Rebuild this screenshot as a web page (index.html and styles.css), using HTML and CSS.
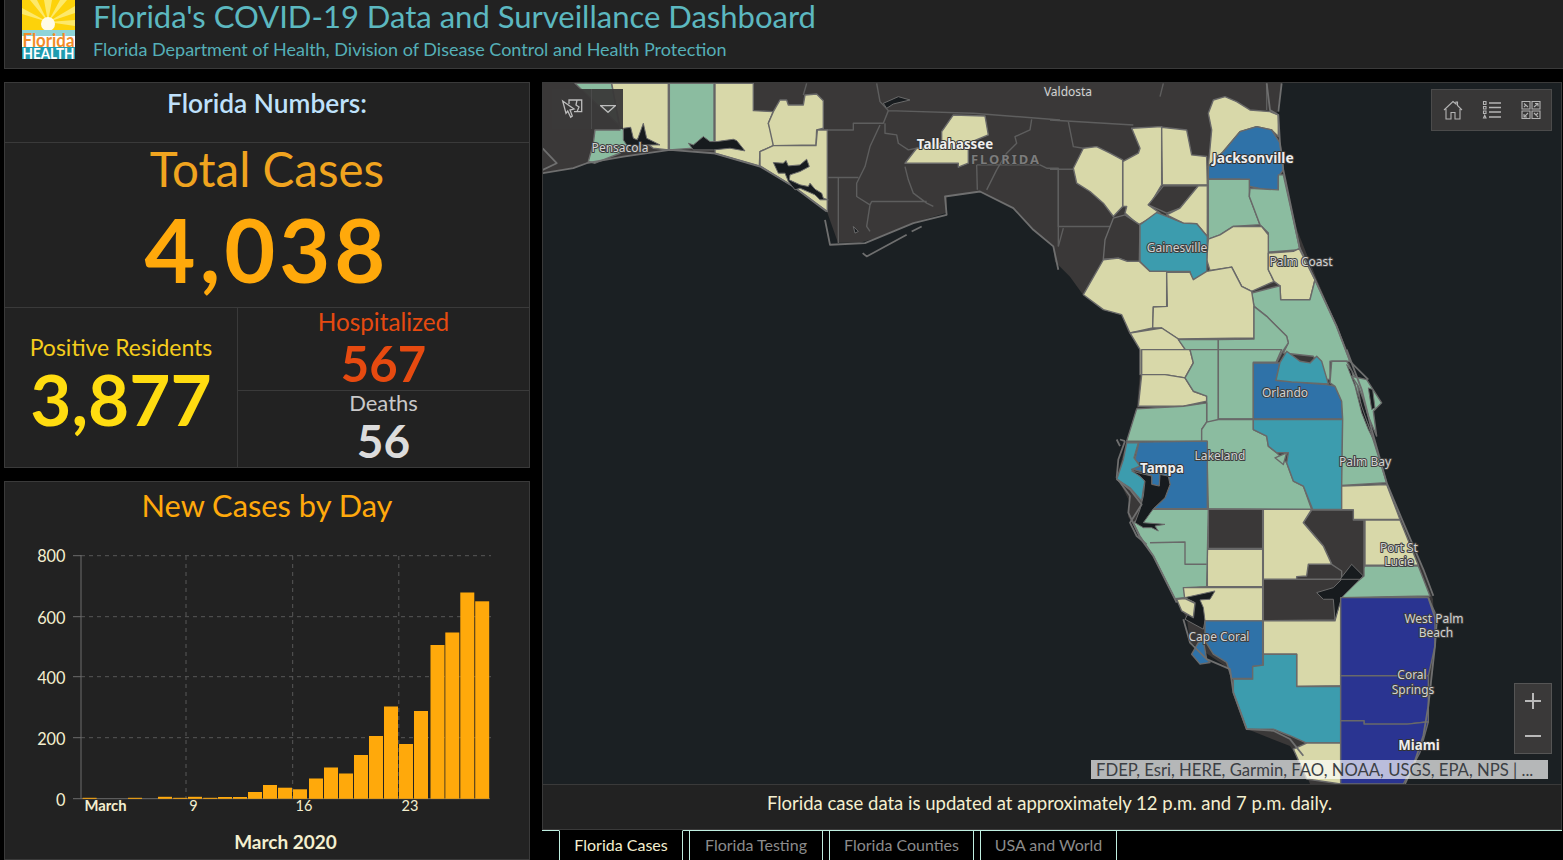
FILE: index.html
```html
<!DOCTYPE html>
<html lang="en">
<head>
<meta charset="utf-8">
<title>Florida's COVID-19 Data and Surveillance Dashboard</title>
<link rel="stylesheet" href="styles.css">
</head>
<body>
<header class="topbar">
  <svg class="logo" viewBox="0 0 53 59">
    <rect width="53" height="36" fill="#fdd20a"/>
    <g fill="#fde96a">
      <path d="M26 22L0 8V14Z"/><path d="M26 22L8 0H15Z"/><path d="M26 22L22 0H30Z"/><path d="M26 22L38 0H45Z"/><path d="M26 22L53 6V13Z"/><path d="M26 22L53 20V26Z"/>
    </g>
    <circle cx="26" cy="24" r="7" fill="#fffbe6"/>
    <rect y="30" width="53" height="6" fill="#8fd4d8"/>
    <rect y="36" width="53" height="11" fill="#ffffff"/>
    <rect y="47" width="53" height="12" fill="#1f9cb0"/>
    <text class="logo-top" x="26.5" y="46.500" textLength="52" lengthAdjust="spacingAndGlyphs">Florida</text>
    <text class="logo-bottom" x="26.5" y="58.500" textLength="52" lengthAdjust="spacingAndGlyphs">HEALTH</text>
  </svg>
  <div class="titles">
    <h1 class="title">Florida's COVID-19 Data and Surveillance Dashboard</h1>
    <p class="subtitle">Florida Department of Health, Division of Disease Control and Health Protection</p>
  </div>
</header>

<main class="layout">
  <div class="left">
    <section class="panel numbers">
      <div class="numbers-head">Florida Numbers:</div>
      <div class="total">
        <div class="total-label">Total Cases</div>
        <div class="total-value">4,038</div>
      </div>
      <div class="split">
        <div class="residents">
          <div class="residents-label">Positive Residents</div>
          <div class="residents-value">3,877</div>
        </div>
        <div class="stack">
          <div class="stack-cell hosp">
            <div class="hosp-label">Hospitalized</div>
            <div class="hosp-value">567</div>
          </div>
          <div class="stack-cell deaths">
            <div class="deaths-label">Deaths</div>
            <div class="deaths-value">56</div>
          </div>
        </div>
      </div>
    </section>

    <section class="panel chart-panel">
      <h2 class="chart-title">New Cases by Day</h2>
      <svg class="chart" viewBox="5 530 524 330">
        <g class="grid">
          <path d="M81 555.7H491M81 616.7H491M81 676.7H491M81 737.7H491"/>
          <path d="M186 556V799M292.7 556V799M398.8 556V799"/>
        </g>
        <path class="axis" d="M81 555V799M73 555.7H81M73 616.7H81M73 676.7H81M73 737.7H81M73 798.7H490"/>
        <g class="bars">
          <rect x="82.6" y="797.8" width="14" height="1"/>
          <rect x="128" y="797.8" width="14" height="1"/>
          <rect x="158" y="796.8" width="14" height="2"/>
          <rect x="173.2" y="797.8" width="14" height="1"/>
          <rect x="188" y="796.8" width="14" height="2"/>
          <rect x="203.2" y="797.8" width="14" height="1"/>
          <rect x="218" y="797" width="14" height="1.8"/>
          <rect x="233" y="797" width="14" height="1.8"/>
          <rect x="248" y="792" width="14" height="6.8"/>
          <rect x="263" y="785" width="14" height="13.8"/>
          <rect x="278" y="787.7" width="14" height="11"/>
          <rect x="293" y="789.3" width="14" height="9.5"/>
          <rect x="309" y="778.5" width="14" height="20.3"/>
          <rect x="324" y="767.5" width="14" height="31.3"/>
          <rect x="339" y="773.5" width="14" height="25.3"/>
          <rect x="354" y="755" width="14" height="43.8"/>
          <rect x="369" y="736" width="14" height="62.8"/>
          <rect x="384" y="706.5" width="14" height="92.3"/>
          <rect x="399" y="744" width="14" height="54.8"/>
          <rect x="414" y="711" width="14" height="87.8"/>
          <rect x="430.5" y="645" width="14" height="153.8"/>
          <rect x="445.3" y="632.5" width="14" height="166.3"/>
          <rect x="460.3" y="592.5" width="14" height="206.3"/>
          <rect x="475.2" y="601.3" width="14" height="197.5"/>
        </g>
        <g class="ylabels">
          <text x="65.500" y="562">800</text>
          <text x="65.500" y="623.5">600</text>
          <text x="65.500" y="683.5">400</text>
          <text x="65.500" y="744.5">200</text>
          <text x="65.500" y="805.5">0</text>
        </g>
        <text class="tick-bold" x="84.5" y="811">March</text>
        <g class="xlabels">
          <text x="193.5" y="811">9</text>
          <text x="304" y="811">16</text>
          <text x="410" y="811">23</text>
        </g>
        <text class="xtitle" x="285.5" y="849">March 2020</text>
      </svg>
    </section>
  </div>

  <div class="right">
    <section class="panel map-panel">
      <div class="map">
        <svg class="map-svg" viewBox="543 83 1018 702" preserveAspectRatio="none">
          <rect class="sea" x="543" y="83" width="1018" height="702"/>
          <path class="land" d="M543 83H1282L1277 113L1283 173L1297 230L1317 280L1347 350L1363 427L1387 483L1403 523L1423 570L1433 600L1435 647L1427 730L1403 785H1310L1303 767L1290 747L1247 730L1233 693L1230 670L1190 643L1187 620L1173 593L1153 557L1140 537L1128 517L1130 503L1117 477L1127 440L1137 407L1142 350L1140 350L1128 332L1122 315L1103 310L1083 295L1070 277L1055 262L1053 247L1033 230L1013 208L980 192L947 197L947 213L913 223L877 238L860 243L838 243L827 212L793 187L760 167L713 153L670 150L623 157L587 163L573 168L543 173Z"/>

          <!-- Panhandle -->
          <g transform="translate(540 80) scale(.33333)">
            <path class="c dark-line" d="M1045 92L1300 100L1560 120M860 150H940V130H1030L1045 92M865 293H955M1035 130V160L1070 165L1075 190L1105 210L1130 205M1020 135L990 200L975 260L950 310V350L990 375L995 365H1160M990 375L980 440L990 455M895 490V293M1095 260L1105 300L1120 340L1160 370L1180 380M1310 255L1312 330M1340 330L1370 270L1400 220L1430 190L1425 170L1470 150L1475 118M1310 255H1500L1520 265H1555V500M800 10L790 45M1010 10L1020 65L1045 92"/>
            <path class="c green" d="M105 10H215L240 150H165L160 190L145 245L165 250L240 220L265 190L250 148Z"/>
            <path class="c cream" d="M215 10H385V210L340 205L300 175L265 190L250 148L240 140Z"/>
            <path class="c green" d="M388 10H522V185L460 205L388 210Z"/>
            <path class="c cream" d="M525 10H640V92L700 95L685 130L700 175L700 197L660 215L658 258L525 220Z"/>
            <path class="c cream" d="M700 95L720 60H740L745 75H790L795 45L830 42L850 62V145L830 150L828 195L700 197L685 130Z"/>
            <path class="c cream" d="M660 215L700 197H828L832 150H862V395L760 320L660 258Z"/>
            <path class="c cream" d="M1240 105L1335 108L1345 165L1285 190V250L1255 262V250H1095L1130 205L1205 185V155Z"/>
            <path class="water" d="M445 190L460 195L490 170L510 185L530 185L580 178L590 182L615 213L570 205L520 210L460 210Z"/>
            <path class="water" d="M250 145L272 142L280 175L292 180L310 130L320 175L360 195L305 195L270 210L250 180Z"/>
            <path class="water" d="M1030 70L1075 50L1110 60L1060 72L1040 85Z"/>
            <path class="water" d="M940 440L955 455L945 460Z"/>
            <path class="c island" d="M8 280L100 265L140 250L250 230L390 210L520 220L660 260L760 320L860 395M855 420L870 495L975 490L1120 430L1220 405L1215 350L1320 335L1420 385L1480 450L1540 500L1555 570M968 520L980 530L1100 465M1115 455L1145 440M8 205L50 250L8 270"/>
          </g>
          <g transform="translate(700 130) scale(.33333)">
            <path class="water" d="M220 98L250 100L258 92L265 108L300 105L320 88L328 110L300 125L270 135L268 150L300 165L325 170L330 160L345 178L365 190L370 205L385 210L360 210L345 195L300 175L285 180L265 155L255 130L235 130L228 115Z"/>
          </g>

          <!-- North-east counties -->
          <g transform="translate(1050 80) scale(.33333)">
            <path class="c dark-line" d="M0 268H70M25 268V440H185M55 125L70 200L100 205M40 445L25 500M0 120L250 135M650 10V90M340 10L330 50"/>
            <path class="c cream" d="M475 100L490 60L525 50L560 65L600 90L660 95L685 105V170L665 150L620 140L570 155L520 215L475 260L485 150Z"/>
            <path class="c blue" d="M475 260L520 215L570 155L620 140L665 150L690 190L700 270L685 290V330H650L600 320L570 298H475Z"/>
            <path class="c green" d="M475 298H598V350L630 435L550 440L510 465L475 478Z"/>
            <path class="c green" d="M600 325L685 330V285L700 285L750 510L655 517V460L630 435L598 350Z"/>
            <path class="c cream" d="M475 478L510 465L550 440H635L655 465V570L672 605L605 635L575 620L545 562L480 572L470 540Z"/>
            <path class="c cream" d="M655 520L730 515L750 505L795 600L780 660H692L690 618L672 605L655 570Z"/>
            <path class="c green" d="M605 640L690 618L692 660H780L795 600L860 740L900 845H840V900H830L790 830L700 820L715 790L710 770L650 710L612 680Z"/>
            <path class="c cream" d="M245 145L335 140V315L305 365L295 375L330 400L265 435L225 400L230 380H218V245L265 220L270 205Z"/>
            <path class="c cream" d="M335 142L410 150L425 225L470 230L472 315H337Z"/>
            <path class="c dark" d="M340 318H445L390 385L350 400L295 375Z"/>
            <path class="c cream" d="M445 318H472V470L440 432L400 430L350 405L390 385Z"/>
            <path class="c dark" d="M190 415L225 405L270 435L268 545H232L205 535L160 538L165 480Z"/>
            <path class="c teal" d="M270 435L320 398L350 410L400 430L440 432L472 470L470 590L455 605L425 598L420 575H300L270 545Z"/>
            <path class="c cream" d="M70 265L100 205L140 200L180 220L218 240V380L190 410L160 370L120 335L80 310Z"/>
            <path class="c cream" d="M100 645L160 540L205 535L232 545H268L300 575H350V680L310 682L308 745L240 760L215 705L160 690Z"/>
            <path class="c cream" d="M350 578H420L430 600L470 575L545 562L575 620L605 635L612 680V775L385 778L335 745H308L310 682L352 680Z"/>
            <path class="c cream" d="M240 760L335 745L385 778L430 845L405 895L270 885L270 810Z"/>
            <path class="c green" d="M385 780H505V900H405L430 845Z"/>
            <path class="c green" d="M505 780L612 778V680L650 710L710 770L715 790L695 820L680 850H610L608 900H505Z"/>
            <path class="island" d="M650 10L660 90L685 105L690 190L700 270L750 510L795 600L860 740L900 845L955 900M695 10L685 95"/>
          </g>

          <!-- Central counties -->
          <g transform="translate(1090 350) scale(.33333)">
            <path class="c cream" d="M155 0H300L310 40L285 85L225 75H155Z"/>
            <path class="c cream" d="M155 75H225L285 85L310 125L350 140V155L280 170H145Z"/>
            <path class="c green" d="M300 0H385V218L350 218V140L310 125L285 85L310 40Z"/>
            <path class="c green" d="M385 0H575L558 38H490V208H385Z"/>
            <path class="c green" d="M140 178L280 170L350 160V218L335 240V275H110Z"/>
            <path class="c green" d="M335 240L350 218L385 210H490V240L530 260L535 290L560 310L590 340L610 395L640 410L665 480L355 478L350 275H335Z"/>
            <path class="c teal" d="M490 210H758L755 480H668L640 410L610 395L590 340L595 310H560L535 290L530 260L490 240Z"/>
            <path class="c green" d="M555 325L590 310L580 345Z"/>
            <path class="c blue" d="M490 40H570L558 92L605 97L710 105L735 110L755 155L758 208H490Z"/>
            <path class="c teal" d="M570 38L590 5L630 35L660 40L680 20L695 35L715 103L605 97L558 92Z"/>
            <path class="c green" d="M725 35H770L800 90L815 180L840 240L890 400L755 408L758 208L755 155L735 110L720 100Z"/>
            <path class="water" d="M770 45L785 65L800 120L815 170L850 270L835 240L815 190L795 110Z"/>
            <path class="c green" d="M785 80L830 90L875 160L850 185L860 260L835 200L820 150L805 110Z"/>
            <path class="water" d="M835 115L848 120L855 175L845 180Z"/>
            <path class="c cream" d="M755 410L890 405L930 510H790V482L755 480Z"/>
            <path class="c cream" d="M825 512H930L985 648H825Z"/>
            <path class="c green" d="M825 650H985L1020 740L755 745L790 690Z"/>
            <path class="c dark" d="M665 482H790V512H822V680L755 735V665L725 645L700 590L640 520Z"/>
            <path class="c cream" d="M520 480H665L640 520L700 590L725 645H655L650 680L620 682V712H520Z"/>
            <path class="c dark" d="M355 480H518V597H355Z"/>
            <path class="c cream" d="M352 600H518V712H352Z"/>
            <path class="c green" d="M185 480H355L350 712L285 715V745L255 748L190 620L150 560L130 520Z"/>
            <path class="c no-fill" d="M180 580L285 578V645H350"/>
            <path class="water" d="M785 645L820 680L755 740L745 770L720 750L680 740L710 725L750 690Z"/>
            <path class="island" d="M770 0L815 120L845 240L890 400L940 520L1000 660L1030 740M105 275L85 330L80 385L120 440L115 490L150 565L190 620L260 760M80 270L90 290"/>
          </g>

          <!-- Tampa Bay -->
          <g transform="translate(1110 430) scale(.33333)">
            <path class="c blue" d="M87 38L292 35V238H130L165 205L180 165L175 140L150 135L148 170L125 165V140L105 130L70 120L90 105L75 90Z"/>
            <path class="c teal" d="M50 40H85L72 85L90 110L65 120L90 140L105 155L100 180L95 215L60 175L20 150L40 90Z"/>
            <path class="water" d="M65 125L105 135L125 140V165L148 170L150 135L175 140L180 165L165 205L130 238L100 280L165 285L135 290L145 305L125 295L100 295L75 280L90 240L100 200L105 155L90 140Z"/>
            <path class="island" d="M30 30L45 35M22 150L60 180L95 225L60 280L80 320L110 345"/>
          </g>

          <!-- South counties -->
          <g transform="translate(1150 580) scale(.33333)">
            <path class="c dark" d="M340 0H575L555 122L340 125Z"/>
            <path class="c cream" d="M100 25H338V125H165L135 90L105 65Z"/>
            <path class="water" d="M195 35L180 60L150 62L160 85L165 125L160 150L105 120L125 85L135 70L105 55Z"/>
            <path class="c cream" d="M80 60L105 58L135 72L130 115L95 95Z"/>
            <path class="c cream" d="M340 125H555L572 60V320L440 322V225H340Z"/>
            <path class="water" d="M500 40L550 25L575 0H630L575 55L555 122L550 60L520 60Z"/>
            <path class="c blue" d="M165 125H338V258L308 262V298H245L230 250L190 225L165 185Z"/>
            <path class="c blue" d="M145 190L160 185L170 240L180 250L150 255L125 225Z"/>
            <path class="c teal" d="M250 300H308V262L340 258V225H440V322L572 322V492H470L420 470L370 450H290L250 340Z"/>
            <path class="c cream" d="M470 492H572V615L470 600L430 510Z"/>
            <path class="c navy" d="M572 55H835L855 100V200L835 290H572Z"/>
            <path class="c navy" d="M572 290H835V428L772 435H642V425H572Z"/>
            <path class="c navy" d="M572 425H642V435H772L835 428L810 520L760 615H572Z"/>
            <path class="island" d="M100 120L120 190L170 240L240 270L250 340L290 450L370 455L420 480L460 530M835 55L860 130L855 200L835 380L820 470L790 560L765 615"/>
          </g>

          <!-- Labels -->
          <g class="labels">
            <text class="lab lab-sm" x="1068" y="96.5">Valdosta</text>
            <text class="lab lab-sm" x="620" y="152">Pensacola</text>
            <text class="lab lab-b" x="955" y="149.5">Tallahassee</text>
            <text class="lab lab-state" x="1006" y="164">FLORIDA</text>
            <text class="lab lab-j" x="1253" y="163.500">Jacksonville</text>
            <text class="lab lab-sm" x="1177" y="252">Gainesville</text>
            <text class="lab lab-sm" x="1301" y="266">Palm Coast</text>
            <text class="lab lab-sm" x="1285" y="397.5">Orlando</text>
            <text class="lab lab-sm" x="1220" y="461">Lakeland</text>
            <text class="lab lab-b" x="1162" y="474">Tampa</text>
            <text class="lab lab-sm" x="1365" y="467">Palm Bay</text>
            <text class="lab lab-sm" x="1399" y="553">Port St</text>
            <text class="lab lab-sm" x="1399" y="567">Lucie</text>
            <text class="lab lab-sm" x="1219" y="642">Cape Coral</text>
            <text class="lab lab-sm" x="1434" y="624">West Palm</text>
            <text class="lab lab-sm" x="1436" y="638">Beach</text>
            <text class="lab lab-sm" x="1412" y="680">Coral</text>
            <text class="lab lab-sm" x="1413" y="695">Springs</text>
            <text class="lab lab-b" x="1419" y="750.5">Miami</text>
          </g>
        </svg>

        <div class="tool select-tool">
          <span class="tool-cell tool-wide">
            <svg class="ico" viewBox="0 0 22 20"><path d="M1.700 2L5 14.300L6.700 12L9.700 18.300L11.300 17L9 11L13 10ZM8 5V1H20.700V12.700H13M16 1L15 6L18 8L16 12.700"/></svg>
          </span>
          <span class="tool-cell tool-drop">
            <svg class="ico-tri" viewBox="0 0 16 8"><path d="M.7 .7H15.300L8 7.300Z"/></svg>
          </span>
        </div>

        <div class="tool right-tools">
          <svg class="ico-bar" viewBox="0 0 20 20"><path d="M1 10L10 1.500L13 4V2H14.500V5.500L19 10M3 9V19H8V12.500H12V19H17V9"/></svg>
          <svg class="ico-bar" viewBox="0 0 20 20"><path class="ico-thick" d="M7 3H19M7 7.500H19M7 12H19M7 17H19"/><path d="M1.500 1.500H4V4.500H1.500ZM1.500 6.500H4V9H1.500ZM1.500 11H4V13.500H1.500ZM2.700 15.300L4 18H1.500Z"/></svg>
          <svg class="ico-bar" viewBox="0 0 20 20"><path d="M1 1.500H9V9H1ZM11 1.500H19V9H11ZM1 11H9V18.500H1ZM11 11H19V18.500H11ZM3 3.500L7 7M3 7L5 5M13 7L17 3.500M14 3.500H17V6.500M3 17L7 13M3 14V17H6M13 13L17 17M17 13L15 15"/></svg>
        </div>

        <div class="zoom">
          <span class="zoom-btn">
            <svg class="ico-zoom" viewBox="0 0 16 16"><path d="M8 0V16M0 8H16"/></svg>
          </span>
          <span class="zoom-btn">
            <svg class="ico-zoom" viewBox="0 0 16 16"><path d="M0 8H16"/></svg>
          </span>
        </div>

        <div class="attribution">FDEP, Esri, HERE, Garmin, FAO, NOAA, USGS, EPA, NPS | ...</div>
      </div>
      <div class="note">Florida case data is updated at approximately 12 p.m. and 7 p.m. daily.</div>
    </section>

    <nav class="tabs">
      <span class="tab tab-active">Florida Cases</span>
      <span class="tab">Florida Testing</span>
      <span class="tab">Florida Counties</span>
      <span class="tab">USA and World</span>
    </nav>
  </div>
</main>
</body>
</html>
```
FILE: styles.css
```css
* { box-sizing: border-box; }
html, body { margin: 0; height: 860px; overflow: hidden; background: #000; }
body { font-family: "Lato", "Liberation Sans", sans-serif; }

.topbar {
  margin-left: 4px;
  height: 69px;
  background: #222;
  border: 1px solid #3a3a3a;
  border-top: 0;
  border-right: 0;
  display: flex;
  align-items: flex-start;
  padding-left: 17px;
  gap: 18px;
}
.logo { width: 53px; height: 59px; flex: none; display: block; }
.logo-top { font: 700 19px "Lato", sans-serif; fill: #f28c28; text-anchor: middle; }
.logo-bottom { font: 700 15.500px "Lato", sans-serif; fill: #fff; text-anchor: middle; }
.title { margin: -2px 0 0; font-size: 31px; font-weight: 400; line-height: 36px; color: #5cb8c0; white-space: nowrap; }
.subtitle { margin: 4px 0 0; font-size: 18px; line-height: 22px; color: #55b0b8; white-space: nowrap; }

.layout { display: flex; gap: 12px; padding: 13px 1px 0 4px; height: 791px; }
.left { width: 526px; flex: none; display: flex; flex-direction: column; gap: 13px; }
.right { flex: 1; min-width: 0; display: flex; flex-direction: column; }
.panel { background: #222; border: 1px solid #3a3a3a; }

.numbers { height: 386px; display: flex; flex-direction: column; }
.numbers-head {
  height: 60px; flex: none; border-bottom: 1px solid #3a3a3a;
  text-align: center; color: #bfe1fb; font-size: 26.300px; font-weight: 600; line-height: 41px;
}
.total { height: 165px; flex: none; border-bottom: 1px solid #3a3a3a; text-align: center; }
.total-label { color: #f0a41f; font-size: 47.500px; font-weight: 400; line-height: 52px; margin-bottom: 4px; }
.total-value { color: #ffa90b; font-size: 88px; font-weight: 700; line-height: 100px; letter-spacing: 4px; }
.split { flex: 1; display: flex; min-height: 0; }
.residents { width: 233px; border-right: 1px solid #3a3a3a; text-align: center; padding-top: 24px; }
.residents-label { color: #f5cd1d; font-size: 23px; line-height: 30px; }
.residents-value { color: #ffdc10; font-size: 71px; font-weight: 700; line-height: 74px; }
.stack { flex: 1; display: flex; flex-direction: column; text-align: center; }
.stack-cell { flex: none; }
.hosp { height: 83px; border-bottom: 1px solid #3a3a3a; }
.hosp-label { color: #e64a10; font-size: 24.300px; line-height: 28px; }
.hosp-value { color: #e64a10; font-size: 49px; font-weight: 700; line-height: 50px; margin-top: 2px; }
.deaths-label { color: #c9c9c9; font-size: 22px; line-height: 24px; }
.deaths-value { color: #dcdcdc; font-size: 46px; font-weight: 700; line-height: 50px; margin-top: 1px; }

.chart-panel { flex: 1; min-height: 0; overflow: hidden; }
.chart-title { margin: 0; height: 48px; text-align: center; color: #ffa90c; font-size: 30.800px; font-weight: 400; line-height: 47px; }
.chart { display: block; width: 524px; height: 330px; }
.grid path { fill: none; stroke: #585858; stroke-width: 1; stroke-dasharray: 4 4; }
.axis { fill: none; stroke: #6c6c6c; stroke-width: 1; }
.bars rect { fill: #ffa90b; }
.ylabels text { font-size: 16.300px; fill: #f4efcf; text-anchor: end; }
.tick-bold { font-size: 14.800px; font-weight: 700; fill: #f4efcf; }
.xlabels text { font-size: 14.500px; fill: #f4efcf; text-anchor: middle; }
.xtitle { font-size: 19px; font-weight: 700; fill: #f4efcf; text-anchor: middle; }

.map-panel { flex: none; height: 748px; display: flex; flex-direction: column; }
.map { position: relative; height: 702px; flex: none; overflow: hidden; border-bottom: 1px solid #3a3a3a; }
.map-svg { display: block; width: 100%; height: 100%; }
.sea { fill: #1b2023; }
.land { fill: #3a3838; stroke: none; }
.c { stroke: #696969; stroke-width: 1.400px; vector-effect: non-scaling-stroke; stroke-linejoin: round; }
.cream { fill: #d8d8a9; }
.green { fill: #8bbca0; }
.teal { fill: #3c9cae; }
.blue { fill: #2f72a8; }
.navy { fill: #2a3491; }
.dark { fill: #3a3838; }
.dark-line { fill: none; stroke: #5e5e5e; }
.no-fill { fill: none; }
.island { fill: none; stroke: #6f6f6f; stroke-width: 1.800px; vector-effect: non-scaling-stroke; stroke-linejoin: round; }
.water { fill: #171b1e; stroke: #6a6a6a; stroke-width: 1px; vector-effect: non-scaling-stroke; stroke-linejoin: round; }
.lab { font-family: "Noto Sans", "DejaVu Sans", sans-serif; text-anchor: middle; paint-order: stroke; stroke-linejoin: round; }
.lab-sm { font-size: 12px; fill: #d2d2d2; stroke: #3f3f3f; stroke-width: 2px; }
.lab-b { font-size: 13.300px; font-weight: 700; fill: #eeeeee; stroke: #333; stroke-width: 2px; }
.lab-j { font-size: 13.800px; font-weight: 700; fill: #eeeeee; stroke: #333; stroke-width: 2px; }
.lab-state { font-size: 13px; font-weight: 700; letter-spacing: 2px; fill: #7c7c7c; stroke: #333; stroke-width: 1px; }

.tool { position: absolute; background: rgba(58, 57, 57, .95); display: flex; align-items: center; }
.select-tool { left: 9px; top: 6px; height: 40px; width: 71px; }
.tool-cell { display: flex; align-items: center; justify-content: center; height: 100%; }
.tool-wide { width: 40px; border-right: 1px solid #4b4b4b; }
.tool-drop { width: 31px; }
.ico { width: 22px; height: 20px; fill: none; stroke: #bdbdbd; stroke-width: 1.300; }
.ico-tri { width: 16px; height: 8px; fill: none; stroke: #bdbdbd; stroke-width: 1.300; }
.right-tools {
  right: 9px; top: 6px; width: 121px; height: 42px;
  border: 1px solid #4b4b4b;
  justify-content: space-between; padding: 0 10px 0 11px;
}
.ico-bar { width: 20px; height: 20px; fill: none; stroke: #b4b4b4; stroke-width: 1.100; }
.ico-thick { stroke-width: 1.500; }
.zoom {
  position: absolute; right: 9px; top: 600px; width: 38px; height: 71px;
  background: #3a3939; border: 1px solid #555; display: flex; flex-direction: column;
}
.zoom-btn { flex: 1; display: flex; align-items: center; justify-content: center; }
.ico-zoom { width: 16px; height: 16px; fill: none; stroke: #b9b9b9; stroke-width: 2; }
.attribution {
  position: absolute; right: 13px; top: 677px; width: 457px; height: 19px; padding-left: 5px;
  background: rgba(255, 255, 255, .68); color: #3c3f44; font-size: 16.700px; line-height: 21px; white-space: nowrap; overflow: hidden;
}
.note { flex: 1; text-align: center; color: #f4efcf; font-size: 18.500px; line-height: 37px; padding-right: 5px; }

.tabs {
  flex: 1; display: flex; align-items: flex-start; gap: 6px; padding-left: 17px;
  background: linear-gradient(#bfeee0, #bfeee0) top / 100% 1px no-repeat;
}
.tab {
  height: 31px; font-size: 16px; line-height: 28px; color: #8b8b8b; text-align: center;
  border: 1px solid #bfeee0; border-bottom: 0; flex: none;
}
.tab-active { width: 124px; color: #f4efcf; background: #000; border-top-color: #000; }
.tab:nth-child(2) { width: 134px; }
.tab:nth-child(3) { width: 145px; }
.tab:nth-child(4) { width: 137px; }
```
